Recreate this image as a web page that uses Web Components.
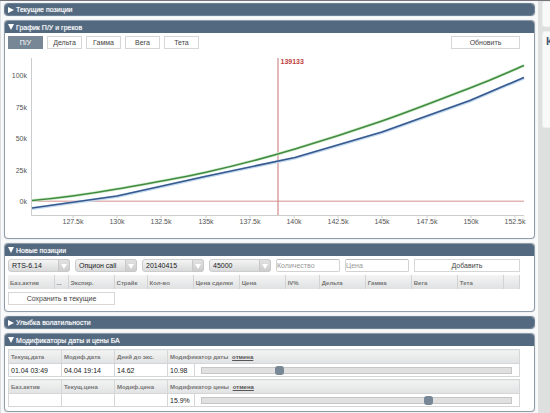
<!DOCTYPE html>
<html lang="ru">
<head>
<meta charset="utf-8">
<title>Опционный калькулятор</title>
<style>
html{background:#dedfdf}
body{margin:0;font:8px/10px "Liberation Sans",Arial,sans-serif;color:#333}
</style>
</head>
<body>
<option-desk></option-desk>
<script>
const define = (name, html, setup) => {
  const template = document.createElement('template');
  template.innerHTML = html;
  customElements.define(name, class extends HTMLElement {
    constructor() {
      super();
      this.attachShadow({mode: 'open'}).append(template.content.cloneNode(true));
    }
    connectedCallback() { if (setup) setup(this, this.shadowRoot); }
  });
};

define('fold-panel', `
<style>
:host{display:block;border-radius:4px;background:#fff;border:1px solid #8f9dab;box-shadow:0 0 1px #a4a9b0;overflow:hidden}
:host([closed]){border-color:#6f8194}
button{display:flex;align-items:center;gap:2px;width:100%;height:11px;padding:0 3px;border:0;background:#53697f;color:#fff;font:7px/11px "Liberation Sans",Arial,sans-serif;text-align:left;text-shadow:0 0 1px #ffffffb0}
:host(:not([closed])) button{height:12px}
svg{width:6px;height:6px;fill:#fff;flex:none}
.body{padding:3px 14px 6px 3px}
:host([closed]) .body{display:none}
:host([compact]) .body{padding-bottom:4px}
</style>
<button type="button"><svg viewBox="0 0 6 6" aria-hidden="true"><path d="M0 0H6L3 6Z"/></svg><span></span></button>
<div class="body"><slot></slot></div>`, (el, root) => {
  root.querySelector('span').textContent = el.getAttribute('heading');
  const draw = () => {
    const closed = el.hasAttribute('closed');
    root.querySelector('path').setAttribute('d', closed ? 'M0 0L6 3L0 6Z' : 'M0 0H6L3 6Z');
    root.querySelector('button').setAttribute('aria-expanded', String(!closed));
  };
  root.querySelector('button').onclick = () => { el.toggleAttribute('closed'); draw(); };
  draw();
});

define('flat-button', `
<style>
:host{display:block}
button{display:block;width:100%;height:13px;padding:0;border:1px solid #d6d6d6;background:#fff;color:#444;font:7px/11px "Liberation Sans",Arial,sans-serif;text-align:center}
:host([active]) button{background:#778795;border-color:#778795;color:#fff}
</style>
<button type="button"><slot></slot></button>`);

define('pick-list', `
<style>
:host{display:grid;height:13px;min-width:0}
select,span{grid-area:1/1}
select{appearance:none;box-sizing:border-box;width:100%;height:13px;padding:0 14px 0 3px;border:1px solid #ccc;border-radius:3px;background:linear-gradient(#f4f4f4,#d9dadb);color:#222;font:7px/11px "Liberation Sans",Arial,sans-serif}
span{justify-self:end;display:grid;place-items:center;box-sizing:border-box;width:12px;height:13px;border:1px solid #c8c8c8;border-radius:0 3px 3px 0;background:linear-gradient(#e2e2e2,#cdcdcd);pointer-events:none}
svg{width:6px;height:6px;fill:#fff}
</style>
<select><option></option></select><span><svg viewBox="0 0 6 6" aria-hidden="true"><path d="M0 1H6L3 6Z"/></svg></span>`, (el, root) => {
  root.querySelector('option').textContent = el.getAttribute('value');
  root.querySelector('select').setAttribute('aria-label', el.getAttribute('label'));
});

define('text-field', `
<style>
:host{display:block;min-width:0}
input{display:block;box-sizing:border-box;width:100%;height:13px;padding:0;border:1px solid #d2d2d2;border-top-color:#bbb;border-radius:2px;background:#fff;font:7px/11px "Liberation Sans",Arial,sans-serif}
input::placeholder{color:#999}
</style>
<input type="text">`, (el, root) => {
  const input = root.querySelector('input');
  input.placeholder = el.getAttribute('label');
  input.setAttribute('aria-label', el.getAttribute('label'));
});

define('profit-chart', `
<style>
:host{display:block}
svg{display:block;width:100%;height:auto;overflow:visible}
text{font:7px "Liberation Sans",Arial,sans-serif;fill:#555}
.y{text-anchor:end}.x{text-anchor:middle}
.axis{stroke:#ccc;fill:none}
.mark{fill:#cf8a8a}
.zero{fill:#dba3a0}
.price{fill:#c04040;font-weight:bold}
.curve{fill:none;stroke-width:1.6;stroke-linejoin:round}
.glow{stroke-width:3}
</style>
<svg viewBox="8 49 512 183" role="img" aria-label="График П/У">
<path class="axis" d="M31.5 58V215.500H524"/>
<g id="labels"></g>
<rect class="zero" x="32" y="200.600" width="492" height="1.200"/>
<rect class="mark" x="277.400" y="58" width="1.200" height="157"/>
<path class="curve glow" stroke="#c3daee" d="M32 208.500L117 196.500L205 177L295 158L382 132.500L470 101L524 78"/>
<path class="curve" stroke="#38598f" d="M32 208L117 196L205 176.500L295 157.500L382 132L470 100.500L524 77.500"/>
<path class="curve glow" stroke="#d3ecd0" d="M32 200.500C60 198 89 194 117 189S176 179 205 172.500S265 158 295 149S353 131 382 121S441 99 470 88S506 73 524 65.500"/>
<path class="curve" stroke="#418c41" d="M32 200.500C60 198 89 194 117 189S176 179 205 172.500S265 158 295 149S353 131 382 121S441 99 470 88S506 73 524 65.500"/>
<text class="price" x="280.500" y="64">139133</text>
</svg>`, (el, root) => {
  const add = (cls, x, y, s) => {
    const t = document.createElementNS('http://www.w3.org/2000/svg', 'text');
    t.setAttribute('class', cls); t.setAttribute('x', x); t.setAttribute('y', y);
    t.textContent = s; root.querySelector('#labels').append(t);
  };
  if (root.querySelector('#labels').childNodes.length) return;
  ['100k','75k','50k','25k','0k'].forEach((s, i) => add('y', 27, 78 + Math.round(i * 31.6), s));
  ['127.5k','130k','132.5k','135k','137.5k','140k','142.5k','145k','147.5k','150k','152.5k']
    .forEach((s, i) => {
      const x = Math.round(73 + i * 44.2);
      add('x', x, 224, s);
      const tick = document.createElementNS('http://www.w3.org/2000/svg', 'path');
      tick.setAttribute('class', 'axis'); tick.setAttribute('d', 'M' + x + ' 215V218');
      root.querySelector('#labels').append(tick);
    });
});

define('position-table', `
<style>
:host{display:block}
table{width:100%;table-layout:fixed;border-collapse:collapse}
th{height:14px;box-sizing:border-box;padding:2px 0 0 2px;border:solid #d2d3d4;border-width:0 1px;background:linear-gradient(#f4f4f4,#e0e1e2);color:#777;font:bold 6px/8px "Liberation Sans",Arial,sans-serif;text-align:left;white-space:nowrap}
th:first-child{border-left:0}
</style>
<table><colgroup></colgroup><thead><tr></tr></thead></table>`, (el, root) => {
  const cols = [['Баз.актив',46],['...',14],['Экспир.',46],['Страйк',33],['Кол-во',46],['Цена сделки',46],['Цена',46],['IV%',34],['Дельта',46],['Гамма',46],['Вега',46],['Тета',46],['',16]];
  const total = cols.reduce((n, c) => n + c[1], 0);
  root.querySelector('colgroup').innerHTML = cols.map(c => '<col style="width:' + c[1] / total * 100 + '%">').join('');
  root.querySelector('tr').innerHTML = cols.map(c => '<th scope="col">' + c[0] + '</th>').join('');
});

define('modifier-table', `
<style>
:host{display:block}
table{width:100%;table-layout:fixed;border-collapse:collapse}
col{width:53px}.num{width:27px}.wide{width:auto}
th,td{box-sizing:border-box;border:1px solid #d5d6d7;text-align:left;white-space:nowrap}
th{height:14px;padding:0 2px;background:linear-gradient(#f3f3f3,#e1e2e3);color:#777;font:bold 6px/8px "Liberation Sans",Arial,sans-serif}
td{height:13px;padding:0 2px;color:#222;font:7px/9px "Liberation Sans",Arial,sans-serif}
td:last-child{padding:0 7px 0 6px}
a{color:#555;margin-left:2px}
input{appearance:none;display:block;width:100%;height:9px;margin:0;background:none}
input::-webkit-slider-runnable-track{box-sizing:border-box;height:7px;border:1px solid #c6c6c6;background:#e0e0e0}
input::-webkit-slider-thumb{appearance:none;width:9px;height:9px;margin-top:-2px;border-radius:3px;background:#778795}
</style>
<table><colgroup><col><col><col><col class="num"><col class="wide"></colgroup>
<thead><tr><th scope="col"></th><th scope="col"></th><th scope="col"></th><th scope="col" colspan="2"><span></span> <a href="#">отмена</a></th></tr></thead>
<tbody><tr><td></td><td></td><td></td><td></td><td><input type="range" min="0" max="1000"></td></tr></tbody></table>`, (el, root) => {
  const heads = el.getAttribute('heads').split('|');
  const cells = el.getAttribute('cells').split('|');
  root.querySelectorAll('th').forEach((th, i) => { if (i < 3) th.textContent = heads[i]; });
  root.querySelector('span').textContent = heads[3];
  root.querySelectorAll('td').forEach((td, i) => { if (i < 4) td.textContent = cells[i]; });
  const input = root.querySelector('input');
  input.value = el.getAttribute('position');
  input.setAttribute('aria-label', heads[3]);
});

define('side-card', `
<style>
:host{display:block;box-sizing:border-box;padding:3px;border-radius:3px 0 0 3px;background:#f9f9f9;border:1px solid #efefef;border-right:0;overflow:hidden;color:#435a74;font:bold 11px/13px "Liberation Sans",Arial,sans-serif;white-space:nowrap}
</style><slot></slot>`);

define('option-desk', `
<style>
:host{display:grid;grid-template-columns:minmax(0,1fr) 8px;column-gap:4px;min-height:100vh;box-sizing:border-box;border-top:1px solid #77737b;background:#dedfdf}
main{display:grid;align-content:start;gap:4px;padding:2px 3px;background:#f8f9fa;border-left:1px solid #dcdde0}
aside{display:grid;grid-template-rows:26px 97px;gap:4px;align-content:start}
.bar{display:flex;gap:4px}
.tab{width:35px}
.refresh{width:69px;margin-left:auto}
.form{display:grid;grid-template-columns:repeat(4,minmax(0,62fr)) repeat(2,minmax(0,64fr)) minmax(0,106fr);gap:5px;margin-bottom:3px}
.save{width:107px;margin-top:3px}
.mods{display:grid;gap:2px}
</style>
<main>
<fold-panel heading="Текущие позиции" closed></fold-panel>
<fold-panel heading="График П/У и греков">
  <div class="bar"><flat-button class="tab" active>П/У</flat-button><flat-button class="tab">Дельта</flat-button><flat-button class="tab">Гамма</flat-button><flat-button class="tab">Вега</flat-button><flat-button class="tab">Тета</flat-button><flat-button class="refresh">Обновить</flat-button></div>
  <profit-chart></profit-chart>
</fold-panel>
<fold-panel heading="Новые позиции">
  <div class="form"><pick-list label="Базовый актив" value="RTS-6.14"></pick-list><pick-list label="Тип" value="Опцион call"></pick-list><pick-list label="Экспирация" value="20140415"></pick-list><pick-list label="Страйк" value="45000"></pick-list><text-field label="Количество"></text-field><text-field label="Цена"></text-field><flat-button>Добавить</flat-button></div>
  <position-table></position-table>
  <flat-button class="save">Сохранить в текущие</flat-button>
</fold-panel>
<fold-panel heading="Улыбка волатильности" closed></fold-panel>
<fold-panel heading="Модификаторы даты и цены БА" compact>
  <div class="mods">
  <modifier-table heads="Текущ.дата|Модиф.дата|Дней до экс.|Модификатор даты" cells="01.04 03:49|04.04 19:14|14.62|10.98" position="244"></modifier-table>
  <modifier-table heads="Баз.актив|Текущ.цена|Модиф.цена|Модификатор цены" cells="|||15.9%" position="739"></modifier-table>
  </div>
</fold-panel>
</main>
<aside><side-card></side-card><side-card>К</side-card></aside>`);
</script>
</body>
</html>
